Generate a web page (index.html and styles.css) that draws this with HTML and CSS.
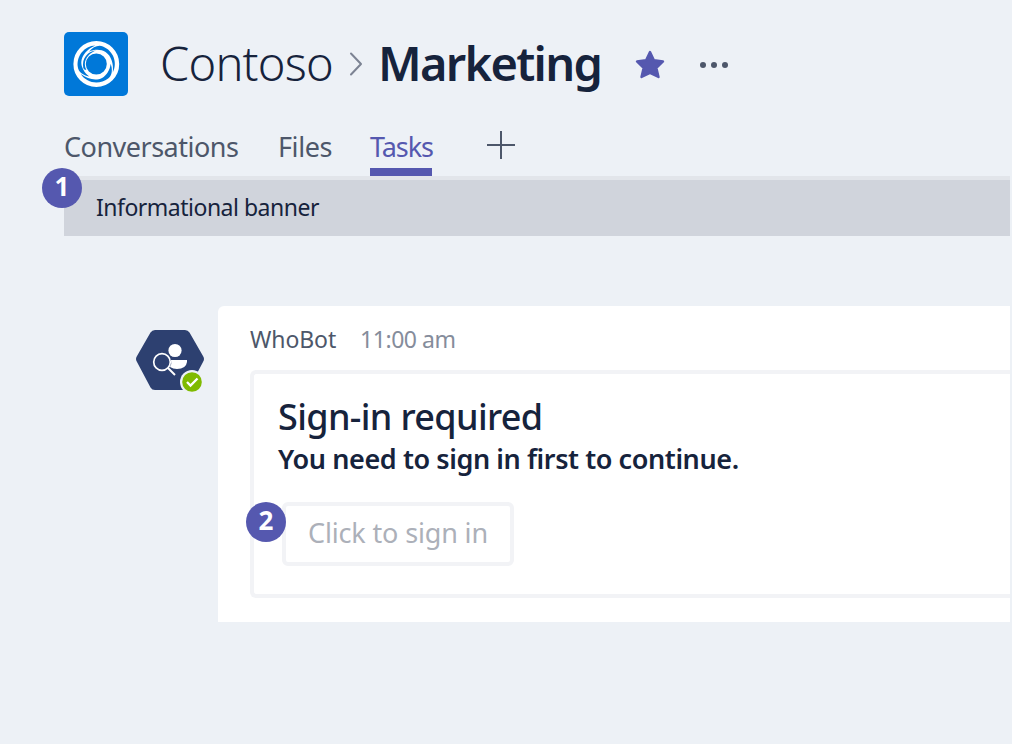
FILE: index.html
```html
<!DOCTYPE html>
<html lang="en">
<head>
<meta charset="utf-8">
<title>Contoso - Marketing</title>
<link rel="stylesheet" href="styles.css">
</head>
<body>
<main class="app">
  <header class="header">
    <svg class="logo" viewBox="0 0 64 64" fill="none">
      <rect width="64" height="64" rx="5" fill="#0078d9"/>
      <circle cx="32.300" cy="32" r="16.700" stroke="#fff" stroke-width="12.400"/>
      <g transform="translate(32.3 32)" fill="#0078d9">
        <path id="swirl" d="M-18.500 3C-20 -8 -12 -18 -1 -18.500C-9 -15 -14.500 -9 -15 -2C-15.200 3 -12 9 -7 12.500C-13 11.500 -18 8 -18.500 3Z"/>
        <use href="#swirl" transform="rotate(120)"/>
        <use href="#swirl" transform="rotate(240)"/>
        <path d="M-13 4C-15 -6 -8 -13 0 -13.500C-6 -11.500 -11 -7 -11.500 0C-11.500 2 -11 4 -10 6C-11.500 6 -12.500 5 -13 4Z"/>
      </g>
    </svg>
    <span class="team">Contoso</span>
    <svg class="chevron" viewBox="0 0 14 24"><path d="M2 1.5L12 12L2 22.5" fill="none" stroke="#7c8393" stroke-width="2" stroke-linecap="round" stroke-linejoin="round"/></svg>
    <h1 class="channel">Marketing</h1>
    <svg class="star" viewBox="0 0 30 30"><path d="M15 2L18.9 10.3L28 11.5L21.4 18L23.5 27L15 22.9L6.5 27L8.6 18L2 11.5L11.1 10.3Z" fill="#5558af" stroke="#5558af" stroke-width="2.4" stroke-linejoin="round"/></svg>
    <svg class="more" viewBox="0 0 28 6" fill="#4d576a"><circle cx="3" cy="3" r="3"/><circle cx="14" cy="3" r="3"/><circle cx="25" cy="3" r="3"/></svg>
  </header>
  <nav class="tabs">
    <a class="tab conversations">Conversations</a>
    <a class="tab files">Files</a>
    <a class="tab active">Tasks</a>
    <svg class="plus" viewBox="0 0 28 28"><path d="M14 0V28M0 14H28" stroke="#4d576a" stroke-width="2"/></svg>
  </nav>
  <section class="banner"><span class="badge one">1</span><span class="banner-text">Informational banner</span></section>
  <section class="message">
    <div class="avatar">
      <svg viewBox="0 0 70 64">
        <path d="M19 2H49Q52 2 53.5 4.5L67 28Q69 31 67 34L53.5 59.5Q52 62 49 62H19Q16 62 14.5 59.5L1 34Q-1 31 1 28L14.500 4.500Q16 2 19 2Z" fill="#2d4070"/>
        <circle cx="39" cy="22.500" r="6.600" fill="#fff"/>
        <path d="M35 32H51V34Q50 41 41 41Q37 41 34 39Q36 36 35 32Z" fill="#fff"/>
        <circle cx="26" cy="34" r="8.300" fill="#2d4070" stroke="#fff" stroke-width="1.700"/>
        <path d="M32 40L39 47" stroke="#fff" stroke-width="2"/>
        <circle cx="56" cy="54" r="12" fill="#edf1f6"/>
        <circle cx="56" cy="54" r="9.800" fill="#7fba00"/>
        <path d="M51 54L54.500 57.500L61.500 50.500" fill="none" stroke="#fff" stroke-width="2.300"/>
      </svg>
    </div>
    <div class="bubble">
      <div class="meta"><span class="sender">WhoBot</span><time class="time">11:00 am</time></div>
      <article class="card">
        <h2 class="title">Sign-in required</h2>
        <p class="subtitle">You need to sign in first to continue.</p>
        <button class="signin"><span class="signin-text">Click to sign in</span><span class="badge two">2</span></button>
      </article>
    </div>
  </section>
</main>
</body>
</html>
```
FILE: styles.css
```css
* { box-sizing: border-box; }
body { margin: 0; background: #fff; font-family: "Noto Sans", "Open Sans", sans-serif; color: #16233c; overflow: hidden; }
.app { height: 744px; padding-right: 2px; background: #edf1f6; overflow: hidden; }
.header { display: flex; height: 128px; padding: 32px 0 0 64px; align-items: flex-start; white-space: nowrap; }
.header > * { flex: none; }
.logo { width: 64px; height: 64px; }
.team { width: 188px; margin-left: 32px; font-size: 47px; line-height: 62px; font-weight: 300; letter-spacing: -0.8px; }
.chevron { width: 14px; height: 24px; margin: 20px 0 0 1px; }
.channel { width: 256px; margin: 0 0 0 15px; font-size: 47px; line-height: 62px; font-weight: 600; letter-spacing: -1.7px; }
.star { width: 30px; height: 30px; margin: 18px 0 0 1px; }
.more { width: 28px; height: 6px; margin: 30px 0 0 35px; }
.tabs { display: flex; height: 48px; padding-left: 64px; white-space: nowrap; }
.tab { height: 48px; font-size: 27px; line-height: 38px; color: #4d576a; }
.conversations { width: 214px; letter-spacing: -0.5px; }
.files { width: 92px; letter-spacing: -0.4px; }
.active { width: 62px; color: #5558af; border-bottom: 8px solid #5558af; letter-spacing: -1.1px; }
.plus { width: 28px; height: 28px; margin: 3px 0 0 55px; }
.banner { position: relative; margin-left: 64px; height: 60px; padding-left: 32px; background: #d0d4dc; border-top: 4px solid #e2e5ea; }
.banner-text { font-size: 23px; line-height: 55px; letter-spacing: -0.5px; }
.badge { position: absolute; width: 40px; height: 40px; border-radius: 50%; background: #5558af; color: #fff; font-size: 26px; line-height: 37px; font-weight: 700; text-align: center; }
.one { left: -22px; top: -12px; }
.two { left: -40px; top: -4px; }
.message { display: flex; padding: 70px 0 0 136px; }
.avatar { width: 82px; padding-top: 22px; }
.avatar svg { display: block; width: 70px; height: 64px; overflow: visible; }
.bubble { flex: 1; height: 316px; padding: 16px 0 0 32px; background: #fff; border-top-left-radius: 6px; }
.meta { display: flex; height: 48px; font-size: 23px; line-height: 35px; white-space: nowrap; }
.sender { width: 110px; color: #4d576a; letter-spacing: -0.1px; }
.time { color: #858c9b; letter-spacing: -0.45px; }
.card { height: 228px; padding: 20px 0 0 24px; border: 4px solid #f2f3f6; border-right: 0; border-radius: 6px 0 0 6px; white-space: nowrap; }
.title { margin: 0; font-size: 36px; line-height: 45px; font-weight: 500; letter-spacing: -0.65px; }
.subtitle { margin: 0; font-size: 27px; line-height: 40px; font-weight: 600; letter-spacing: -0.41px; }
.signin { position: relative; display: block; width: 232px; height: 64px; margin: 23px 0 0 4px; padding: 0 0 2px 22px; text-align: left; border: 4px solid #f2f3f6; border-radius: 6px; background: #fff; font-family: inherit; font-size: 27px; line-height: 54px; color: #acb0b9; }
.signin-text { letter-spacing: -0.15px; }
```
